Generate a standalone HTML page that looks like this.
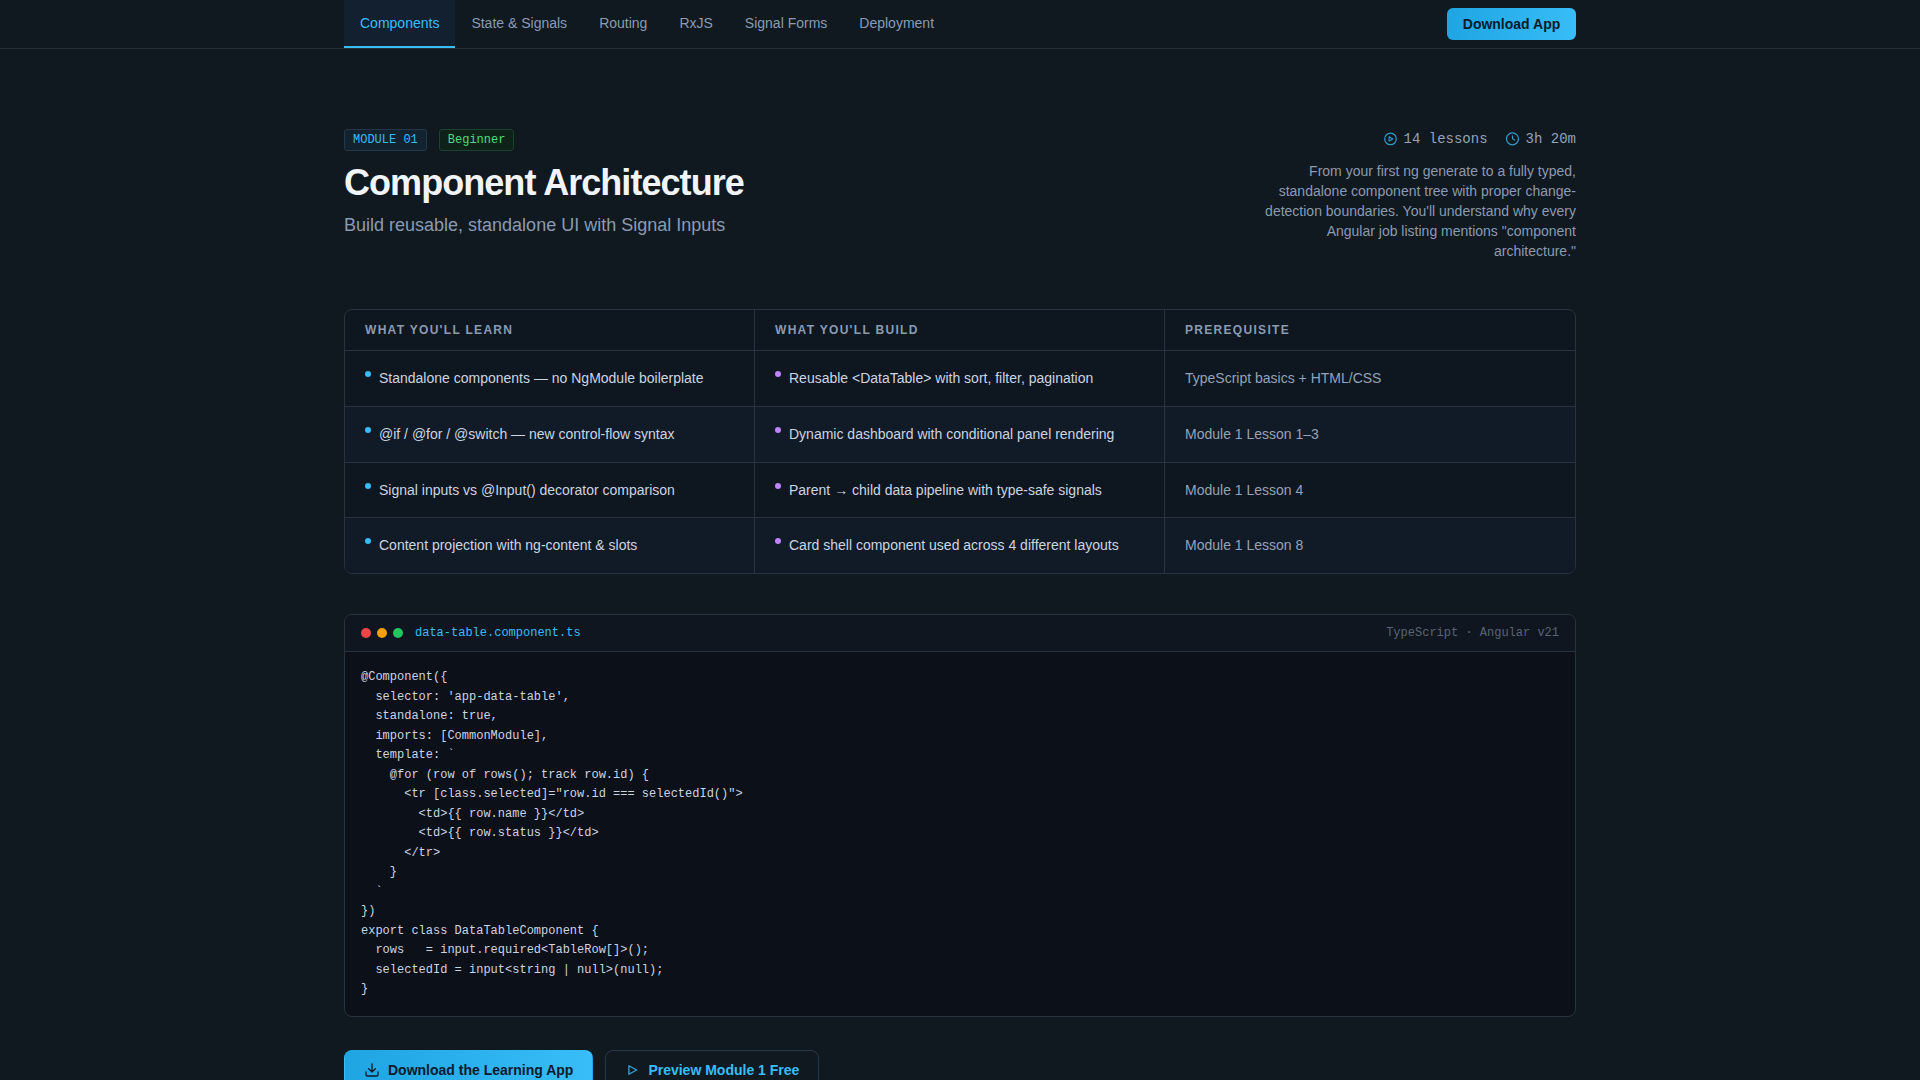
<!DOCTYPE html>
<html>
<head>
<meta charset="utf-8">
<style>
*{box-sizing:border-box;margin:0;padding:0}
html,body{width:1920px;height:1080px;overflow:hidden;background:#101820;font-family:"Liberation Sans",sans-serif;color:#e2e8f0}
.mono{font-family:"Liberation Mono",monospace}
nav{position:absolute;left:0;top:0;width:1920px;height:49px;border-bottom:1px solid #262f3a;background:#101820}
.tabs{position:absolute;left:344px;top:0;height:48px;display:flex}
.tab{height:48px;padding:0 16px;font-size:14px;line-height:46px;color:#8b9bb0;position:relative}
.tab.active{color:#38bdf8;background:#13202f}
.tab.active:after{content:"";position:absolute;left:0;right:0;bottom:0;height:2px;background:#38bdf8}
.dl{position:absolute;left:1447px;top:8px;width:129px;height:32px;border-radius:6px;background:linear-gradient(90deg,#1ea5e2,#38bdf8);color:#0b1a2c;font-weight:bold;font-size:14px;line-height:32px;text-align:center}
.badges{position:absolute;left:344px;top:129px;display:flex;gap:12px}
.badge{height:22px;padding:0 8px;font-size:12px;line-height:20px;border-radius:3px;border:1px solid}
.b1{color:#38bdf8;background:#12222f;border-color:#22394c}
.b2{color:#4ade80;background:#0f2219;border-color:#1b432d}
h1{position:absolute;left:344px;top:161px;font-size:36px;line-height:44px;font-weight:bold;color:#f1f5f9;letter-spacing:-0.95px}
.sub{position:absolute;left:344px;top:213px;font-size:18px;line-height:24px;color:#8b9bb0}
.meta{position:absolute;right:344px;top:129px;height:20px;display:flex;gap:18px;font-size:14px;line-height:20px;color:#94a3b8}
.meta span{display:flex;align-items:center;gap:6px}
.desc{position:absolute;right:344px;top:161px;width:330px;text-align:right;font-size:14px;line-height:20px;color:#8b9bb0}
.tbl{position:absolute;left:344px;top:309px;width:1232px;height:265px;border:1px solid #29333f;border-radius:8px;overflow:hidden;background:#0e1620}
.row{display:flex;border-bottom:1px solid #29333f}
.row:last-child{border-bottom:none}
.cell{width:410.67px;border-right:1px solid #29333f;padding:0 20px;display:flex;align-items:center}
.cell:last-child{border-right:none}
.hd .cell{height:40px;font-size:12px;font-weight:bold;letter-spacing:1.3px;color:#8b9bb0}
.bd .cell{height:54.75px;font-size:14px;line-height:22.75px;color:#cbd5e1;align-items:flex-start;padding-top:16px}
.bd.alt{background:#111b28}
.dot{width:6px;height:6px;border-radius:50%;margin-right:8px;flex:none;margin-top:4px}
.d1{background:#38bdf8}.d2{background:#c084fc}
.bd .pre{color:#94a3b8}
.code{position:absolute;left:344px;top:614px;width:1232px;height:403px;border:1px solid #29333f;border-radius:8px;overflow:hidden;background:#0b1019}
.chd{height:37px;border-bottom:1px solid #29333f;background:#0f1620;position:relative}
.cdot{position:absolute;top:13px;width:10px;height:10px;border-radius:50%}
.fname{position:absolute;left:70px;top:0;line-height:36px;font-size:12px;color:#38bdf8}
.lang{position:absolute;right:16px;top:0;line-height:36px;font-size:12px;color:#5a6472}
pre{font-family:"Liberation Mono",monospace;font-size:12px;line-height:19.5px;color:#cbd5e1;padding:16px 16px}
.btns{position:absolute;left:344px;top:1050px;display:flex;gap:12px}
.btn{height:40px;border-radius:8px;font-size:14px;font-weight:bold;display:flex;align-items:center;padding:0 19px;border:1px solid transparent}
.bp{background:linear-gradient(90deg,#1ea5e2,#38bdf8);color:#0b1a2c}
.bo{border-color:#263846;color:#38bdf8;padding-left:18px}
</style>
</head>
<body>
<nav>
  <div class="tabs">
    <div class="tab active">Components</div>
    <div class="tab">State &amp; Signals</div>
    <div class="tab">Routing</div>
    <div class="tab">RxJS</div>
    <div class="tab">Signal Forms</div>
    <div class="tab">Deployment</div>
  </div>
  <div class="dl">Download App</div>
</nav>

<div class="badges">
  <div class="badge b1 mono">MODULE 01</div>
  <div class="badge b2 mono">Beginner</div>
</div>
<h1>Component Architecture</h1>
<div class="sub">Build reusable, standalone UI with Signal Inputs</div>

<div class="meta mono">
  <span><svg width="14" height="14" viewBox="0 0 14 14" style="opacity:.8"><circle cx="6.5" cy="6.9" r="5.8" fill="none" stroke="#38bdf8" stroke-width="1.2"/><path d="M5.1 4.8 L8.9 6.9 L5.1 9 Z" fill="none" stroke="#38bdf8" stroke-width="1.1" stroke-linejoin="round"/></svg>14 lessons</span>
  <span><svg width="14" height="14" viewBox="0 0 14 14" style="opacity:.8"><circle cx="6.5" cy="6.8" r="6" fill="none" stroke="#38bdf8" stroke-width="1.2"/><path d="M6.5 3.8 V6.8 L8.6 7.9" fill="none" stroke="#38bdf8" stroke-width="1.1" stroke-linecap="round" stroke-linejoin="round"/></svg>3h 20m</span>
</div>
<div class="desc">From your first ng generate to a fully typed, standalone component tree with proper change-detection boundaries. You'll understand why every Angular job listing mentions "component architecture."</div>

<div class="tbl">
  <div class="row hd">
    <div class="cell">WHAT YOU'LL LEARN</div>
    <div class="cell">WHAT YOU'LL BUILD</div>
    <div class="cell">PREREQUISITE</div>
  </div>
  <div class="row bd">
    <div class="cell"><i class="dot d1"></i>Standalone components — no NgModule boilerplate</div>
    <div class="cell"><i class="dot d2"></i>Reusable &lt;DataTable&gt; with sort, filter, pagination</div>
    <div class="cell pre">TypeScript basics + HTML/CSS</div>
  </div>
  <div class="row bd alt">
    <div class="cell"><i class="dot d1"></i>@if / @for / @switch — new control-flow syntax</div>
    <div class="cell"><i class="dot d2"></i>Dynamic dashboard with conditional panel rendering</div>
    <div class="cell pre">Module 1 Lesson 1–3</div>
  </div>
  <div class="row bd">
    <div class="cell"><i class="dot d1"></i>Signal inputs vs @Input() decorator comparison</div>
    <div class="cell"><i class="dot d2"></i>Parent → child data pipeline with type-safe signals</div>
    <div class="cell pre">Module 1 Lesson 4</div>
  </div>
  <div class="row bd alt">
    <div class="cell"><i class="dot d1"></i>Content projection with ng-content &amp; slots</div>
    <div class="cell"><i class="dot d2"></i>Card shell component used across 4 different layouts</div>
    <div class="cell pre">Module 1 Lesson 8</div>
  </div>
</div>

<div class="code">
  <div class="chd">
    <i class="cdot" style="left:16px;background:#ef4444"></i>
    <i class="cdot" style="left:32px;background:#f59e0b"></i>
    <i class="cdot" style="left:48px;background:#22c55e"></i>
    <div class="fname mono">data-table.component.ts</div>
    <div class="lang mono">TypeScript · Angular v21</div>
  </div>
<pre>@Component({
  selector: 'app-data-table',
  standalone: true,
  imports: [CommonModule],
  template: `
    @for (row of rows(); track row.id) {
      &lt;tr [class.selected]="row.id === selectedId()"&gt;
        &lt;td&gt;{{ row.name }}&lt;/td&gt;
        &lt;td&gt;{{ row.status }}&lt;/td&gt;
      &lt;/tr&gt;
    }
  `
})
export class DataTableComponent {
  rows   = input.required&lt;TableRow[]&gt;();
  selectedId = input&lt;string | null&gt;(null);
}</pre>
</div>

<div class="btns">
  <div class="btn bp"><svg width="16" height="16" viewBox="0 0 24 24" style="margin-right:8px"><path d="M21 15v4a2 2 0 0 1-2 2H5a2 2 0 0 1-2-2v-4M7 10l5 5 5-5M12 15V3" fill="none" stroke="#0b1a2c" stroke-width="2" stroke-linecap="round" stroke-linejoin="round"/></svg>Download the Learning App</div>
  <div class="btn bo"><svg width="16" height="16" viewBox="0 0 16 16" style="margin-right:8px"><path d="M4.9 3.7 L12.7 8 L4.9 12.3 Z" fill="none" stroke="#38bdf8" stroke-width="1.3" stroke-linejoin="round" opacity=".85"/></svg>Preview Module 1 Free</div>
</div>
</body>
</html>
